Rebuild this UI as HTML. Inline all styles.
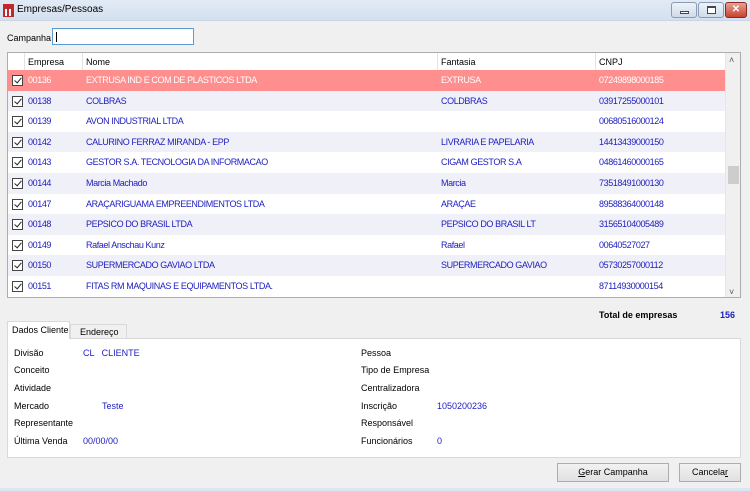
<!DOCTYPE html>
<html><head><style>
*{margin:0;padding:0;box-sizing:border-box}
body{width:750px;height:491px;background:#f0f0f0;font-family:"Liberation Sans",sans-serif;font-size:9px;color:#000;position:relative;overflow:hidden}
.abs{position:absolute}
.title{left:0;top:0;width:750px;height:21px;background:linear-gradient(#e2ebf5,#d3e0ef);border-bottom:1px solid #c9d6e6}
.wb{top:2px;height:16px;border:1px solid #8a9bb3;border-radius:3px;background:linear-gradient(#eef3f9,#cfdbe9)}
.grid{left:7px;top:52px;width:734px;height:246px;background:#fff;border:1px solid #adadad;overflow:hidden}
.row{position:absolute;left:0;width:717px;height:20.6px;color:#2020c0;white-space:nowrap;letter-spacing:-0.4px}
.row span{position:absolute;top:5px}
.cb{position:absolute;left:4px;top:5px;width:11px;height:11px;border:1px solid #444;background:#fff}
.cb:after{content:"";position:absolute;left:3px;top:0px;width:3px;height:6px;border:solid #222;border-width:0 1.5px 1.5px 0;transform:rotate(40deg)}
.hd{position:absolute;top:0;height:18px;left:0;width:717px;border-bottom:1px solid #e0e0e0}
.hd span{position:absolute;top:4px}
.sep{position:absolute;top:0;height:18px;width:1px;background:#e3e3e3}
.lbl{position:absolute}
.blue{color:#2020c0}
.btn{position:absolute;top:463px;height:19px;border:1px solid #adadad;background:linear-gradient(#f2f2f2,#e1e1e1);text-align:center;line-height:17px}
</style></head><body>
<div class="abs title"></div>
<div class="abs" style="left:3px;top:4px;width:11px;height:13px;background:#c0282c"></div>
<div class="abs" style="left:5px;top:9px;width:2px;height:7px;background:#fff"></div>
<div class="abs" style="left:9px;top:9px;width:2px;height:7px;background:#fff"></div>
<div class="abs" style="left:17px;top:4px;font-size:10px">Empresas/Pessoas</div>
<div class="abs wb" style="left:671px;width:26px"><div class="abs" style="left:8px;top:8px;width:9px;height:3px;border:1px solid #445;background:#fff"></div></div>
<div class="abs wb" style="left:698px;width:26px"><div class="abs" style="left:8px;top:3px;width:9px;height:8px;border:1px solid #445;border-top-width:2px;background:#fff"></div></div>
<div class="abs wb" style="left:725px;width:22px;border-color:#8a2a20;background:linear-gradient(#e8a193,#c7432e);color:#fff;font-weight:bold;text-align:center;line-height:13px;font-size:10px">✕</div>

<div class="abs" style="left:7px;top:33px">Campanha</div>
<div class="abs" style="left:52px;top:28px;width:142px;height:17px;border:1px solid #5b9bd5;background:#fff"><div class="abs" style="left:3px;top:3px;width:1px;height:10px;background:#000"></div></div>

<div class="abs grid">
<div class="hd"><span style="left:20px">Empresa</span><span style="left:78px">Nome</span><span style="left:433px">Fantasia</span><span style="left:591px">CNPJ</span>
<div class="sep" style="left:16px"></div><div class="sep" style="left:74px"></div><div class="sep" style="left:429px"></div><div class="sep" style="left:587px"></div></div>
<div class="row" style="top:17px;background:#ff8e8e;color:#fff"><div class="cb"></div><span style="left:20px">00136</span><span style="left:78px">EXTRUSA IND E COM DE PLASTICOS LTDA</span><span style="left:433px">EXTRUSA</span><span style="left:591px">07249898000185</span></div>
<div class="row" style="top:37.6px;background:#f0f0f8"><div class="cb"></div><span style="left:20px">00138</span><span style="left:78px">COLBRAS</span><span style="left:433px">COLDBRAS</span><span style="left:591px">03917255000101</span></div>
<div class="row" style="top:58.2px"><div class="cb"></div><span style="left:20px">00139</span><span style="left:78px">AVON INDUSTRIAL LTDA</span><span style="left:591px">00680516000124</span></div>
<div class="row" style="top:78.8px;background:#f0f0f8"><div class="cb"></div><span style="left:20px">00142</span><span style="left:78px">CALURINO FERRAZ MIRANDA - EPP</span><span style="left:433px">LIVRARIA E PAPELARIA</span><span style="left:591px">14413439000150</span></div>
<div class="row" style="top:99.4px"><div class="cb"></div><span style="left:20px">00143</span><span style="left:78px">GESTOR S.A. TECNOLOGIA DA INFORMACAO</span><span style="left:433px">CIGAM GESTOR S.A</span><span style="left:591px">04861460000165</span></div>
<div class="row" style="top:120px;background:#f0f0f8"><div class="cb"></div><span style="left:20px">00144</span><span style="left:78px">Marcia Machado</span><span style="left:433px">Marcia</span><span style="left:591px">73518491000130</span></div>
<div class="row" style="top:140.6px"><div class="cb"></div><span style="left:20px">00147</span><span style="left:78px">ARAÇARIGUAMA EMPREENDIMENTOS LTDA</span><span style="left:433px">ARAÇAE</span><span style="left:591px">89588364000148</span></div>
<div class="row" style="top:161.2px;background:#f0f0f8"><div class="cb"></div><span style="left:20px">00148</span><span style="left:78px">PEPSICO DO BRASIL LTDA</span><span style="left:433px">PEPSICO DO BRASIL LT</span><span style="left:591px">31565104005489</span></div>
<div class="row" style="top:181.8px"><div class="cb"></div><span style="left:20px">00149</span><span style="left:78px">Rafael Anschau Kunz</span><span style="left:433px">Rafael</span><span style="left:591px">00640527027</span></div>
<div class="row" style="top:202.4px;background:#f0f0f8"><div class="cb"></div><span style="left:20px">00150</span><span style="left:78px">SUPERMERCADO GAVIAO LTDA</span><span style="left:433px">SUPERMERCADO GAVIAO</span><span style="left:591px">05730257000112</span></div>
<div class="row" style="top:223px"><div class="cb"></div><span style="left:20px">00151</span><span style="left:78px">FITAS RM MAQUINAS E EQUIPAMENTOS LTDA.</span><span style="left:591px">87114930000154</span></div>
<div class="abs" style="left:717px;top:0;width:17px;height:246px;background:#f0f0f0;border-left:1px solid #e6e6e6"></div>
<div class="abs" style="left:720px;top:113px;width:11px;height:18px;background:#cdcdcd"></div>
<div class="abs" style="left:721px;top:2px;font-size:9px;color:#555">˄</div>
<div class="abs" style="left:721px;top:234px;font-size:9px;color:#555">˅</div>
</div>

<div class="abs" style="left:599px;top:310px;font-weight:bold">Total de empresas</div>
<div class="abs blue" style="left:720px;top:310px;font-weight:bold">156</div>

<div class="abs" style="left:7px;top:338px;width:734px;height:120px;background:#fff;border:1px solid #d9d9d9"></div>
<div class="abs" style="left:7px;top:321px;width:63px;height:18px;background:#fff;border:1px solid #d9d9d9;border-bottom:none;padding:3px 0 0 4px">Dados Cliente</div>
<div class="abs" style="left:70px;top:324px;width:57px;height:14px;background:#f0f0f0;border:1px solid #d9d9d9;border-bottom:none;padding:2px 0 0 9px">Endereço</div>

<div class="lbl" style="left:14px;top:348px">Divisão</div><div class="lbl blue" style="left:83px;top:348px">CL &nbsp;&nbsp;CLIENTE</div>
<div class="lbl" style="left:14px;top:365px">Conceito</div>
<div class="lbl" style="left:14px;top:383px">Atividade</div>
<div class="lbl" style="left:14px;top:401px">Mercado</div><div class="lbl blue" style="left:102px;top:401px">Teste</div>
<div class="lbl" style="left:14px;top:418px">Representante</div>
<div class="lbl" style="left:14px;top:436px">Última Venda</div><div class="lbl blue" style="left:83px;top:436px">00/00/00</div>
<div class="lbl" style="left:361px;top:348px">Pessoa</div>
<div class="lbl" style="left:361px;top:365px">Tipo de Empresa</div>
<div class="lbl" style="left:361px;top:383px">Centralizadora</div>
<div class="lbl" style="left:361px;top:401px">Inscrição</div><div class="lbl blue" style="left:437px;top:401px">1050200236</div>
<div class="lbl" style="left:361px;top:418px">Responsável</div>
<div class="lbl" style="left:361px;top:436px">Funcionários</div><div class="lbl blue" style="left:437px;top:436px">0</div>

<div class="btn" style="left:557px;width:112px"><u>G</u>erar Campanha</div>
<div class="btn" style="left:679px;width:62px">Cancela<u>r</u></div>
<div class="abs" style="left:0;top:488px;width:750px;height:3px;background:#dbe6f3"></div>
</body></html>
